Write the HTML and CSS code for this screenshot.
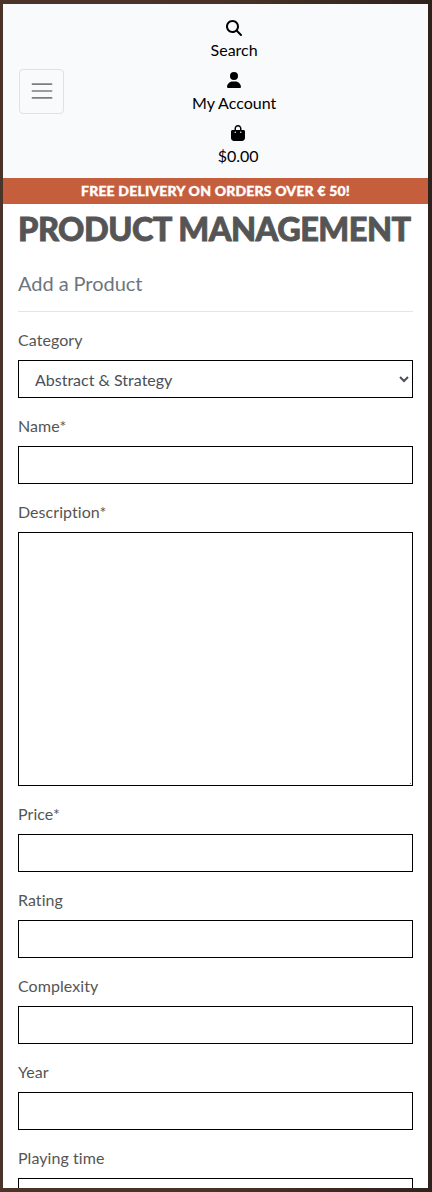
FILE: index.html
```html
<!DOCTYPE html>
<html lang="en">
<head>
<meta charset="utf-8">
<meta name="viewport" content="width=device-width, initial-scale=1">
<title>Product Management</title>
<link rel="stylesheet" href="styles.css">
</head>
<body>
<div class="page">
  <header class="header">
    <button class="toggler" type="button" aria-label="Toggle navigation">
      <svg width="30" height="30" viewBox="0 0 30 30"><path stroke="rgba(0,0,0,0.5)" stroke-width="2" stroke-linecap="round" stroke-miterlimit="10" d="M4 7h22M4 15h22M4 23h22"/></svg>
    </button>
    <nav class="links">
      <a class="link" href="#">
        <svg class="icon icon-search" viewBox="0 0 512 512"><path d="M416 208c0 45.900-14.900 88.300-40 122.700L502.600 457.400c12.500 12.500 12.500 32.800 0 45.300s-32.800 12.500-45.300 0L330.700 376c-34.400 25.200-76.800 40-122.700 40C93.100 416 0 322.900 0 208S93.100 0 208 0S416 93.100 416 208zM208 352a144 144 0 1 0 0-288 144 144 0 1 0 0 288z"/></svg>
        <span>Search</span>
      </a>
      <a class="link" href="#">
        <svg class="icon icon-narrow" viewBox="0 0 448 512"><path d="M224 256A128 128 0 1 0 224 0a128 128 0 1 0 0 256zm-45.700 48C79.800 304 0 383.800 0 482.300C0 498.700 13.300 512 29.700 512H418.300c16.400 0 29.700-13.300 29.700-29.700C448 383.800 368.200 304 269.700 304H178.300z"/></svg>
        <span>My Account</span>
      </a>
      <a class="link link-bag" href="#">
        <svg class="icon icon-narrow" viewBox="0 0 448 512"><path d="M112 112C112 50.100 162.100 0 224 0s112 50.100 112 112v48h64c26.500 0 48 21.500 48 48V416c0 53-43 96-96 96H96c-53 0-96-43-96-96V208c0-26.500 21.500-48 48-48h64V112zm48 48H288V112c0-35.300-28.700-64-64-64s-64 28.700-64 64v48zm-24 96a24 24 0 1 0 0-48 24 24 0 1 0 0 48zm200-24a24 24 0 1 0 -48 0 24 24 0 1 0 48 0z"/></svg>
        <span>$0.00</span>
      </a>
    </nav>
  </header>
  <div class="banner">FREE DELIVERY ON ORDERS OVER € 50!</div>
  <main class="content">
    <h2 class="title">PRODUCT MANAGEMENT</h2>
    <h5 class="subtitle">Add a Product</h5>
    <hr class="rule">
    <form class="form">
      <div class="group"><label for="category">Category</label><select class="control" id="category"><option>Abstract &amp; Strategy</option></select></div>
      <div class="group"><label for="name">Name*</label><input class="control" id="name" type="text"></div>
      <div class="group"><label for="description">Description*</label><textarea class="control control-area" id="description"></textarea></div>
      <div class="group"><label for="price">Price*</label><input class="control" id="price" type="text"></div>
      <div class="group"><label for="rating">Rating</label><input class="control" id="rating" type="text"></div>
      <div class="group"><label for="complexity">Complexity</label><input class="control" id="complexity" type="text"></div>
      <div class="group"><label for="year">Year</label><input class="control" id="year" type="text"></div>
      <div class="group"><label for="time">Playing time</label><input class="control" id="time" type="text"></div>
    </form>
  </main>
</div>
</body>
</html>
```
FILE: styles.css
```css
* { box-sizing: border-box; }
html { height: 100%; overflow: hidden; }
body {
  margin: 0;
  height: 1192px;
  padding: 4px 4px 4px 3px;
  overflow: hidden;
  background: linear-gradient(90deg, #4a3429 0%, #493328 50%, #2e231c 100%);
  font: 400 16px/24px Lato, sans-serif;
  font-variant-ligatures: none;
  color: #555;
}
.page { height: 1184px; overflow: hidden; background: #fff; }
.header {
  display: flex;
  align-items: center;
  height: 174px;
  padding: 0 16px;
  background: #f8fafc;
}
.toggler {
  display: flex;
  align-items: center;
  justify-content: center;
  width: 45px;
  height: 45px;
  padding: 0;
  border: 1px solid #dfe1e3;
  border-radius: 4px;
  background: transparent;
}
.toggler svg { width: 26px; height: 26px; }
.links { display: flex; flex-direction: column; align-items: center; gap: 5px; margin-left: 128px; }
.link { display: flex; flex-direction: column; align-items: center; color: #000; text-decoration: none; }
.link-bag { margin-left: 8px; }
.icon { width: 16px; height: 16px; margin: 5px 0 3px; }
.icon-search { margin: 6px 0 2px; }
.icon-narrow { width: 14px; }
.banner {
  height: 26px;
  background: #c55e3d;
  color: #fff;
  font-size: 14px;
  font-weight: 900;
  line-height: 26px;
  letter-spacing: 0.18px;
  text-align: center;
  -webkit-text-stroke: 0.35px #fff;
}
.content { padding: 0 15px; }
.title {
  margin: 4px 0 0;
  font-size: 32.5px;
  font-weight: 900;
  line-height: 41px;
  letter-spacing: -0.5px;
  white-space: nowrap;
  -webkit-text-stroke: 0.8px #555;
}
.subtitle { margin: 22px 0 0; font-size: 20px; font-weight: 400; line-height: 24px; letter-spacing: -0.05px; color: #6c757d; }
.rule { margin: 16px 0; border: 0; border-top: 1px solid #e5e5e5; }
.group { margin-bottom: 16px; }
.group label { display: block; margin-bottom: 8px; letter-spacing: 0.06px; }
.control {
  display: block;
  width: 100%;
  height: 38px;
  padding: 6px 12px;
  border: 1px solid #000;
  border-radius: 0;
  background: #fff;
  color: #495057;
  font: inherit;
}
.control-area {
  height: 254px;
  resize: none;
  background: linear-gradient(#777, #777) right 1px bottom 1px / 1px 1px no-repeat #fff;
}
```
